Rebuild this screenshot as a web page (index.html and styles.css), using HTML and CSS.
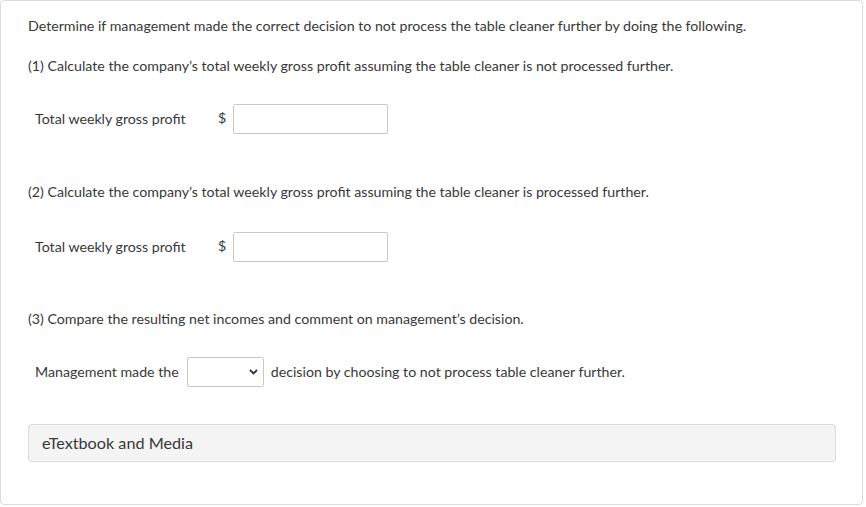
FILE: index.html
```html
<!DOCTYPE html>
<html>
<head>
<meta charset="utf-8">
<link rel="stylesheet" href="styles.css">
</head>
<body>
<div class="card">
  <p class="q q-first">Determine if management made the correct decision to not process the table cleaner further by doing the following.</p>
  <p class="q q-1">(1) Calculate the company’s total weekly gross profit assuming the table cleaner is not processed further.</p>
  <div class="row row-1">
    <span class="label">Total weekly gross profit</span>
    <span class="dollar">$</span>
    <input class="amount" type="text">
  </div>
  <p class="q q-2">(2) Calculate the company’s total weekly gross profit assuming the table cleaner is processed further.</p>
  <div class="row row-2">
    <span class="label">Total weekly gross profit</span>
    <span class="dollar">$</span>
    <input class="amount" type="text">
  </div>
  <p class="q q-3">(3) Compare the resulting net incomes and comment on management’s decision.</p>
  <div class="row row-3">
    <span class="label-inline">Management made the</span>
    <span class="select-wrap">
      <select class="choice"><option></option></select>
      <svg class="chev" width="9" height="6" viewBox="0 0 9 6"><path d="M1 1 L4.5 4.5 L8 1" fill="none" stroke="#333" stroke-width="1.8"/></svg>
    </span>
    <span class="after">decision by choosing to not process table cleaner further.</span>
  </div>
  <div class="media">eTextbook and Media</div>
</div>
</body>
</html>
```
FILE: styles.css
```css
html, body {
  margin: 0;
  padding: 0;
  background: #fff;
}
body {
  font-family: Lato, "Open Sans", sans-serif;
  font-size: 14.2px;
  color: #383838;
}
.card {
  margin: 0;
  width: 863px;
  height: 505px;
  box-sizing: border-box;
  border: 1px solid #dcdcdc;
  border-radius: 4px;
  padding: 15px 26px 0 27px;
}
.q {
  margin: 0;
  line-height: 20px;
}
.q-1 { margin-top: 20px; }
.q-2 { margin-top: 48px; }
.q-3 { margin-top: 47px; }
.row {
  display: flex;
  align-items: center;
  padding-left: 7px;
  height: 30px;
}
.row-1 { margin-top: 28px; }
.row-2 { margin-top: 30px; }
.row-3 { margin-top: 28px; height: 30px; }
.label {
  width: 183px;
  position: relative;
  top: -1px;
}
.dollar {
  width: 15px;
  position: relative;
  top: -2px;
}
.amount {
  width: 155px;
  height: 30px;
  box-sizing: border-box;
  border: 1px solid #c8c8c8;
  border-radius: 2px;
  margin: 0;
  padding: 0 6px;
  font: inherit;
}
.label-inline {
  margin-right: 8px;
  position: relative;
  top: -1px;
}
.select-wrap {
  position: relative;
  display: inline-block;
  width: 77px;
  height: 30px;
}
.choice {
  appearance: none;
  -webkit-appearance: none;
  width: 77px;
  height: 30px;
  box-sizing: border-box;
  border: 1px solid #c8c8c8;
  border-radius: 2px;
  background: #fff;
  margin: 0;
  font: inherit;
}
.chev {
  position: absolute;
  right: 6px;
  top: 12px;
}
.after {
  margin-left: 7px;
  position: relative;
  top: -1px;
}
.media {
  margin-top: 37px;
  height: 38px;
  box-sizing: border-box;
  border: 1px solid #dcdcdc;
  border-radius: 3px;
  background: #f4f4f4;
  font-size: 16.2px;
  line-height: 36px;
  padding-left: 13px;
}
```
